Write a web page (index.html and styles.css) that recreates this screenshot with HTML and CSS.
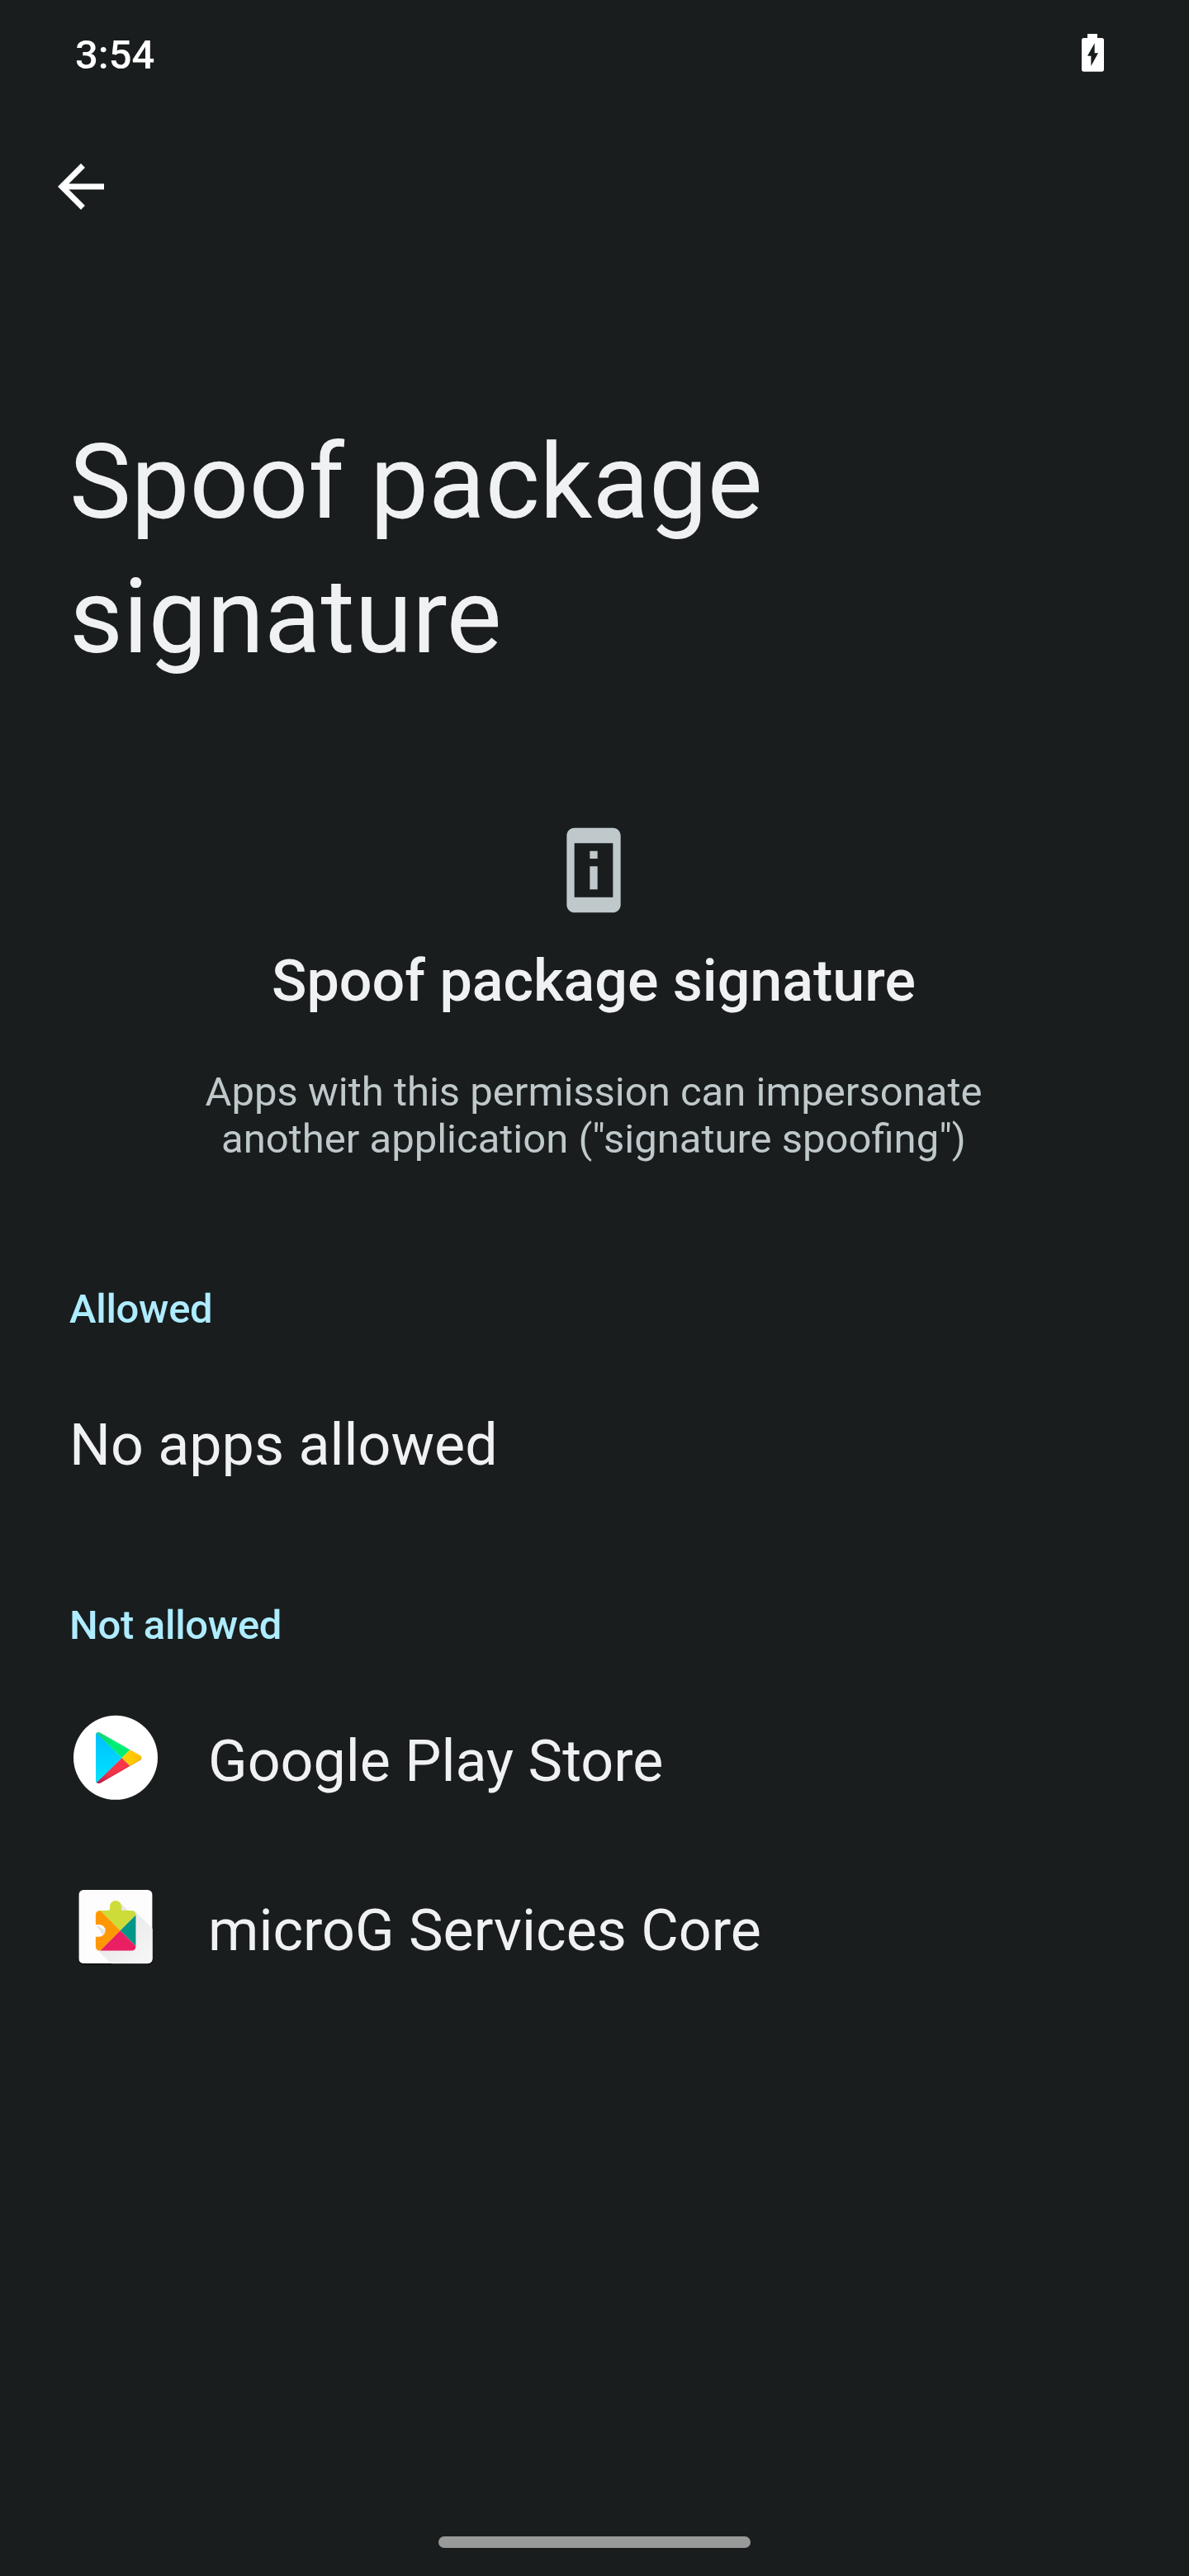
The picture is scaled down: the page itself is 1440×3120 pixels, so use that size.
FILE: index.html
```html
<!DOCTYPE html>
<html lang="en">
<head>
<meta charset="utf-8">
<title>Spoof package signature</title>
<link rel="stylesheet" href="styles.css">
</head>
<body>
<div class="screen">
  <header class="status-bar">
    <span class="clock">3:54</span>
    <svg class="battery" viewBox="0 0 81 138" aria-label="Charging">
      <path fill="#fff" fill-rule="evenodd" d="M21 0H57V15H73Q81 15 81 23V129Q81 137 73 137H8Q0 137 0 129V23Q0 15 8 15H21ZM47 34L21 80H34V117L60 70H47Z"/>
    </svg>
  </header>
  <nav class="toolbar">
    <svg class="back" viewBox="0 0 24 24" aria-label="Back">
      <path fill="#fff" d="M20 11H7.83l5.59-5.59L12 4l-8 8 8 8 1.41-1.41L7.83 13H20v-2z"/>
    </svg>
  </nav>
  <h1 class="title">Spoof package signature</h1>
  <main class="content">
    <section class="intro">
      <svg class="intro-icon" viewBox="0 0 24 24">
        <path fill="#bfc8ca" d="M13 7h-2v2h2V7zm0 4h-2v6h2v-6zm4-9.99L7 1c-1.1 0-2 .9-2 2v18c0 1.1.9 2 2 2h10c1.1 0 2-.9 2-2V3c0-1.1-.9-1.99-2-1.99zM17 19H7V5h10v14z"/>
      </svg>
      <h2 class="intro-title">Spoof package signature</h2>
      <p class="intro-text">Apps with this permission can impersonate another application ("signature spoofing")</p>
    </section>
    <section class="group">
      <h3 class="group-title">Allowed</h3>
      <p class="empty">No apps allowed</p>
    </section>
    <section class="group">
      <h3 class="group-title">Not allowed</h3>
      <ul class="apps">
        <li class="app">
          <svg class="app-icon" viewBox="12 39 336 336">
            <defs>
              <linearGradient id="blue" x1="0" y1="0" x2="0" y2="1"><stop offset="0" stop-color="#00bfff"/><stop offset="1" stop-color="#00e4ff"/></linearGradient>
              <linearGradient id="green" x1="0" y1="0" x2="1" y2="1"><stop offset="0" stop-color="#1fc873"/><stop offset=".5" stop-color="#00ee76"/><stop offset="1" stop-color="#00ee76"/></linearGradient>
              <linearGradient id="red" x1="1" y1="0" x2="0" y2="1"><stop offset="0" stop-color="#ff3a44"/><stop offset=".6" stop-color="#ee334d"/><stop offset="1" stop-color="#b8174e"/></linearGradient>
              <linearGradient id="yellow" x1="0" y1="0" x2="1" y2="0"><stop offset="0" stop-color="#ffd400"/><stop offset="1" stop-color="#ffbb00"/></linearGradient>
              <clipPath id="play"><path d="M108 122Q109 112 120 114Q124 115 128 118L269 198Q275 202 275 207Q275 212 269 216L128 297Q124 300 118 300Q109 300 108 292Z"/></clipPath>
            </defs>
            <circle cx="180" cy="206.5" r="153" fill="#fff"/>
            <g clip-path="url(#play)">
              <path fill="url(#blue)" d="M108 112L203 208L108 302Z"/>
              <path fill="url(#green)" d="M108 112V114L203 208L232 178L130 108Z"/>
              <path fill="url(#yellow)" d="M203 208L232 178L280 190V225L232 237Z"/>
              <path fill="url(#red)" d="M203 208L232 237L130 304H108V300Z"/>
              <path fill="none" stroke="#000" stroke-opacity=".14" stroke-width="5" d="M118 300L128 297L269 216Q275 212 275 207"/>
              <path fill="none" stroke="#fff" stroke-opacity=".22" stroke-width="4" d="M118 113L128 118L269 198"/>
            </g>
          </svg>
          <span class="app-name">Google Play Store</span>
        </li>
        <li class="app">
          <svg class="app-icon" viewBox="12 24 336 336">
            <defs>
              <linearGradient id="shade" gradientUnits="userSpaceOnUse" x1="150" y1="150" x2="290" y2="300"><stop offset="0" stop-color="#e4e4e4"/><stop offset="1" stop-color="#f5f5f5"/></linearGradient>
              <clipPath id="tile"><rect x="46" y="57" width="268" height="268" rx="18"/></clipPath>
              <clipPath id="piece"><path d="M125 132H159V117A21 21 0 0 1 201 117V132H236Q254 132 254 150V260Q254 278 236 278H125Q107 278 107 260V227H121A22 22 0 0 0 121 183H107V150Q107 132 125 132Z"/></clipPath>
            </defs>
            <rect x="45" y="60" width="270" height="269" rx="19" fill="#0b0e0f"/>
            <g clip-path="url(#tile)">
              <path fill="#fdfdfd" d="M46 57H314V325H46Z"/>
              <path fill="url(#shade)" d="M195 102L225 132H248L318 202V330H169L112 273L136 227L110 186L121 183H150V132Z"/>
              <path fill="#fdfdfd" d="M107 183H121A22 22 0 0 1 143 205L110 183Z"/>
            </g>
            <g clip-path="url(#piece)">
              <path fill="#cddc39" d="M100 112V90H270V132L197 205L118 126Z"/>
              <path fill="#ff9800" d="M100 108L197 205L117 285H100Z"/>
              <path fill="#009688" d="M197 205L260 142V268Z"/>
              <path fill="#e91e63" d="M197 205L260 268V285H117Z"/>
            </g>
          </svg>
          <span class="app-name">microG Services Core</span>
        </li>
      </ul>
    </section>
  </main>
  <footer class="gesture-bar"><span class="gesture-handle"></span></footer>
</div>
</body>
</html>
```
FILE: styles.css
```css
* {
  box-sizing: border-box;
  margin: 0;
  padding: 0;
}

body {
  background: #191d1e;
  color: #f0f1f3;
  font-family: Roboto, "Liberation Sans", sans-serif;
}

svg {
  display: block;
  flex: none;
}

.screen {
  display: flex;
  flex-direction: column;
  width: 1440px;
  height: 3120px;
  overflow: hidden;
}

.status-bar {
  display: flex;
  justify-content: space-between;
  height: 128px;
  padding: 38px 103px 0 91px;
}

.clock {
  color: #fff;
  font-size: 49px;
  font-weight: 500;
  line-height: 57px;
}

.battery {
  width: 27px;
  height: 46px;
  margin-top: 3px;
}

.toolbar {
  height: 196px;
  padding: 56px;
}

.back {
  width: 84px;
  height: 84px;
}

.title {
  width: 1100px;
  margin: 179px 0 0 84px;
  font-size: 126px;
  font-weight: 400;
  line-height: 163px;
}

.content {
  flex: 1;
}

.intro {
  display: flex;
  flex-direction: column;
  align-items: center;
  padding: 169px 238px 0 236px;
  text-align: center;
}

.intro-icon {
  width: 112px;
  height: 112px;
}

.intro-title {
  margin-top: 37px;
  font-size: 70px;
  font-weight: 500;
  line-height: 82px;
}

.intro-text {
  margin: 65px 0 149px;
  color: #bfc8ca;
  font-size: 49px;
  line-height: 57px;
}

.group-title {
  padding-left: 84px;
  color: #aeecff;
  font-size: 49px;
  font-weight: 500;
  letter-spacing: -0.3px;
  line-height: 57px;
}

.empty {
  padding: 95px 84px 149px;
  font-size: 70px;
  line-height: 82px;
}

.apps {
  padding-top: 34px;
  list-style: none;
}

.app {
  display: flex;
  gap: 56px;
  height: 205px;
  padding: 42px 84px 0;
}

.app-icon {
  width: 112px;
  height: 112px;
}

.app-name {
  padding-top: 19px;
  font-size: 70px;
  line-height: 82px;
}

.gesture-bar {
  display: flex;
  justify-content: center;
  height: 48px;
}

.gesture-handle {
  width: 378px;
  height: 14px;
  border-radius: 7px;
  background: #979a98;
}
```
